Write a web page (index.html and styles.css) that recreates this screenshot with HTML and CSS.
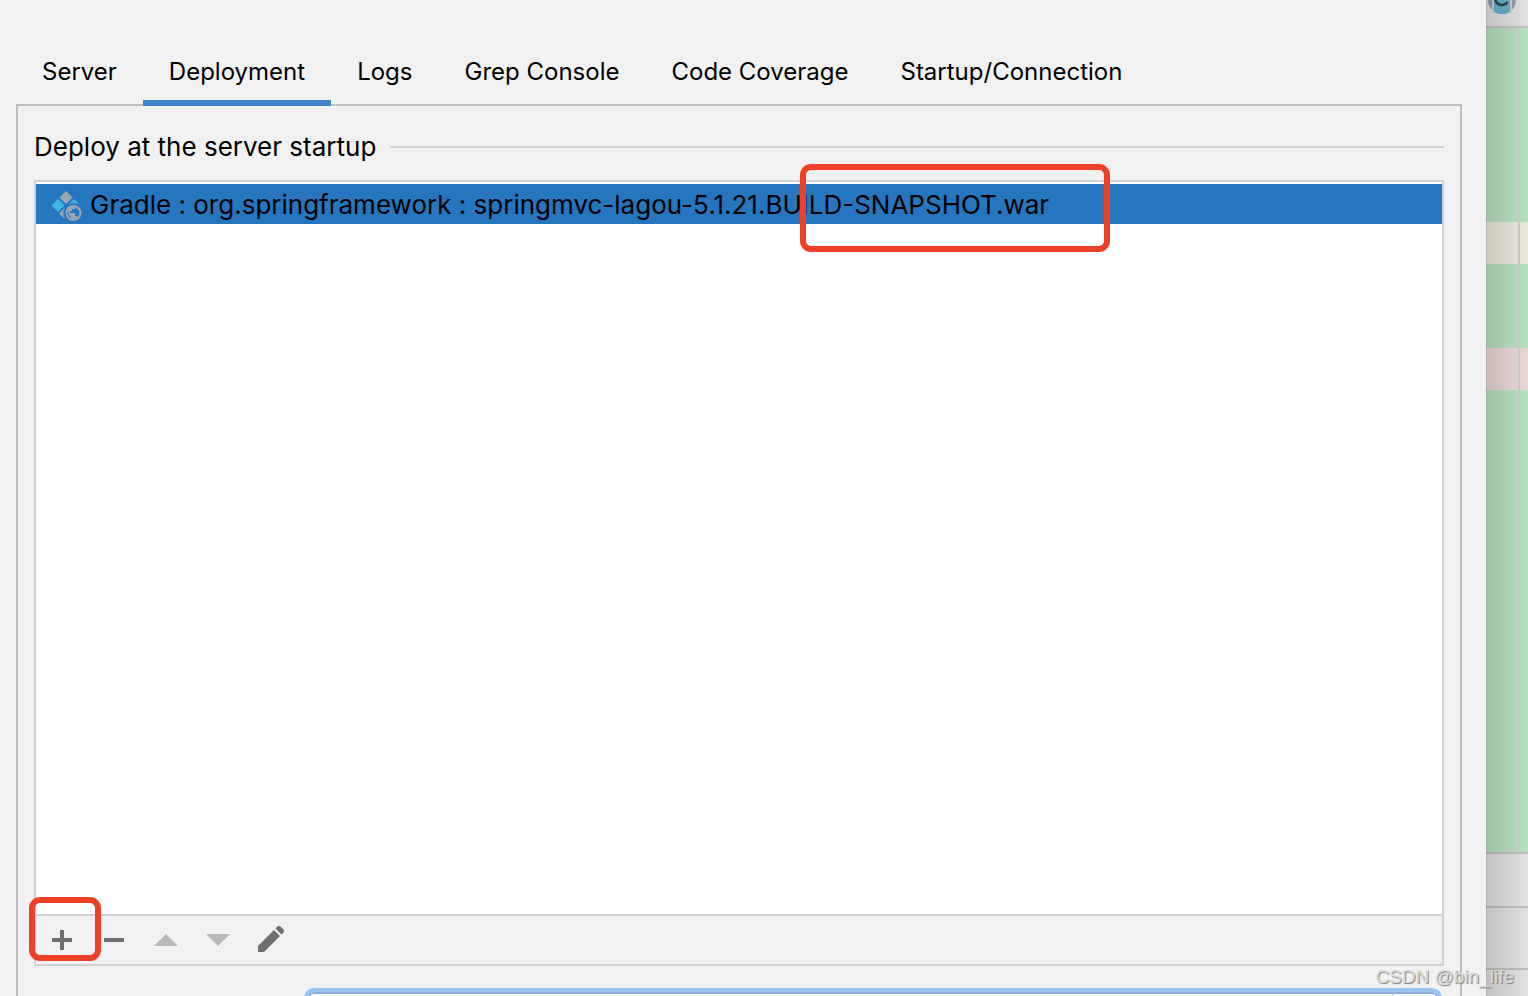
FILE: index.html
```html
<!DOCTYPE html>
<html lang="en">
<head>
<meta charset="utf-8">
<meta name="viewport" content="width=device-width, initial-scale=1">
<title>Deployment</title>
<link rel="stylesheet" href="styles.css">
</head>
<body>
<div class="screen">
  <main class="dialog">
    <nav class="tabs" role="tablist">
      <button class="tab" role="tab">Server</button>
      <button class="tab tab-active" role="tab" aria-selected="true">Deployment</button>
      <button class="tab" role="tab">Logs</button>
      <button class="tab" role="tab">Grep Console</button>
      <button class="tab" role="tab">Code Coverage</button>
      <button class="tab" role="tab">Startup/Connection</button>
    </nav>
    <section class="panel">
      <h2 class="heading">Deploy at the server startup</h2>
      <div class="deploy">
        <ul class="list">
          <li class="item">
            <svg class="item-icon" viewBox="0 0 32 32" aria-hidden="true">
              <path fill="#9aa7b0" d="M16 0l6.500 6.500L16 13 9.500 6.500z"/>
              <path fill="#40b6e0" d="M8 8l6.500 6.500L8 21 1.500 14.500z"/>
              <path fill="#40b6e0" d="M24 8l5.500 5.500q-6-2.500-11 0z"/>
              <path fill="#9aa7b0" d="M15 16.500q-3.500 5 0 11.500l-6-5.500z"/>
              <circle cx="23.500" cy="22" r="7" fill="none" stroke="#9aa7b0" stroke-width="2"/>
              <path fill="#9aa7b0" d="M17 19q2-4 6-4l2 1v2h-3v2h-2v2h5v3h2l1 2q-4 3-7 2v-3l-2-2v-2z"/>
            </svg>
            <span>Gradle : org.springframework : springmvc-lagou-5.1.21.BUILD-SNAPSHOT.war</span>
            <div class="mark mark-file"></div>
          </li>
        </ul>
        <div class="toolbar">
          <button class="tool" aria-label="Add"><svg viewBox="0 0 32 32"><path fill="#6e6e6e" d="M14 6h4v8h8v4h-8v8h-4v-8H6v-4h8z"/></svg></button>
          <button class="tool" aria-label="Remove"><svg viewBox="0 0 32 32"><path fill="#6e6e6e" d="M6 14h20v4H6z"/></svg></button>
          <button class="tool" aria-label="Move up" disabled><svg viewBox="0 0 32 32"><path fill="#bababa" d="M4 22L16 10l12 12z"/></svg></button>
          <button class="tool" aria-label="Move down" disabled><svg viewBox="0 0 32 32"><path fill="#bababa" d="M4 10h24L16 22z"/></svg></button>
          <button class="tool" aria-label="Edit"><svg viewBox="0 0 32 32"><path fill="#6e6e6e" d="M4 22L20 6l6 6L10 28H4zM21.500 4.500l2-2q1.500-1 3 0l3 3q1 1.500 0 3l-2 2z"/></svg></button>
          <div class="mark mark-add"></div>
        </div>
      </div>
      <div class="context">
        <select class="context-select" aria-label="Application context"><option></option></select>
      </div>
    </section>
  </main>
  <aside class="editor">
    <div class="editor-tab">
      <svg class="class-icon" viewBox="0 0 30 30" aria-hidden="true">
        <circle cx="15" cy="15" r="14" fill="#98a3ad"/>
        <path fill="#69b5d0" d="M7 0h16v27q-8 4-16 0z"/>
        <path fill="none" stroke="#d4d8da" stroke-width="2" d="M6 0v28M24 0v28"/>
        <path fill="none" stroke="#2d4651" stroke-width="2.500" d="M20.500 17A6.500 6 0 1 1 20.500 11"/>
      </svg>
    </div>
    <div class="code">
      <div class="code-warn"></div>
      <div class="code-error"></div>
    </div>
    <div class="pane pane-tabs"></div>
    <div class="pane pane-body"></div>
    <div class="pane-status"></div>
  </aside>
  <div class="watermark">CSDN @bin_life</div>
</div>
</body>
</html>
```
FILE: styles.css
```css
* { box-sizing: border-box; }

body {
  margin: 0;
  font-family: Inter, "Liberation Sans", sans-serif;
  color: #000;
}

.screen {
  position: relative;
  display: flex;
  height: 100vh;
  overflow: hidden;
  background: #f1f1f1;
}

.dialog {
  flex: 1;
  min-width: 0;
  display: flex;
  flex-direction: column;
  padding: 38px 24px 0 16px;
}

.tabs { display: flex; }

.tab {
  height: 68px;
  margin-bottom: -2px;
  padding: 6px 26px 0;
  border: 0;
  border-bottom: 6px solid transparent;
  background: none;
  font: 24px/28px Inter, sans-serif;
  color: inherit;
  white-space: nowrap;
}

.tab-active {
  position: relative;
  border-bottom-color: #4083c9;
}

.panel {
  flex: 1;
  min-height: 0;
  display: flex;
  flex-direction: column;
  padding: 24px 16px 0;
  border: 2px solid #bfbfbf;
  border-bottom: 0;
}

.heading {
  display: flex;
  align-items: center;
  gap: 14px;
  margin: 0 0 16px;
  font-size: 26px;
  font-weight: 400;
  line-height: 34px;
}

.heading::after {
  content: "";
  flex: 1;
  height: 2px;
  background: #d1d1d1;
}

.deploy {
  flex: 1;
  min-height: 0;
  display: flex;
  flex-direction: column;
  border: 2px solid #d1d1d1;
}

.list {
  flex: 1;
  margin: 0;
  padding: 2px 0 0;
  list-style: none;
  background: #fff;
}

.item {
  position: relative;
  display: flex;
  align-items: center;
  gap: 8px;
  height: 40px;
  padding: 2px 14px 0;
  background: #2675bf;
  font-size: 26px;
  line-height: 38px;
  white-space: nowrap;
}

.item-icon {
  width: 32px;
  height: 32px;
  margin-top: 4px;
}

.mark {
  position: absolute;
  border: 6px solid #ee4026;
  border-radius: 11px;
  pointer-events: none;
}

.mark-file {
  left: 764px;
  top: -20px;
  width: 310px;
  height: 88px;
}

.mark-add {
  left: -7px;
  top: -19px;
  width: 72px;
  height: 64px;
}

.toolbar {
  position: relative;
  display: flex;
  gap: 20px;
  height: 50px;
  padding: 8px 10px;
  border-top: 2px solid #d1d1d1;
}

.tool {
  width: 32px;
  height: 32px;
  padding: 0;
  border: 0;
  background: none;
}

.tool svg { display: block; }

.context {
  height: 30px;
  padding: 22px 2px 0 270px;
  overflow: hidden;
}

.context-select {
  display: block;
  width: 100%;
  height: 56px;
  appearance: none;
  border: 4px solid #97c3f3;
  border-radius: 10px;
  background: linear-gradient(#cfcfcf, #cfcfcf) right 44px top / 2px 100% no-repeat #fff;
  box-shadow: inset 0 0 0 2px #87afda;
}

.editor {
  position: relative;
  width: 42px;
  display: flex;
  flex-direction: column;
  background: #e8e8e8;
}

.editor::after {
  content: "";
  position: absolute;
  inset: 0;
  border-left: 1px solid rgba(0, 0, 0, 0.2);
  background: linear-gradient(to right, rgba(0, 0, 0, 0.16), rgba(0, 0, 0, 0.03));
}

.editor-tab {
  height: 28px;
  border-bottom: 2px solid #c9c9c9;
  overflow: hidden;
}

.class-icon {
  display: block;
  width: 30px;
  height: 30px;
  margin: -15px 0 0 1px;
}

.code {
  position: relative;
  flex: 1;
  padding-top: 194px;
  background: #bee6c4;
}

.code::after {
  content: "";
  position: absolute;
  top: 0;
  bottom: 0;
  right: 8px;
  width: 2px;
  background: #d3d3d3;
}

.code-warn {
  height: 42px;
  margin-bottom: 84px;
  background: #f3f0e2;
}

.code-error {
  height: 42px;
  background: #f2dfdc;
}

.pane { border-top: 2px solid #c6c6c6; }
.pane-tabs { height: 54px; }
.pane-body { height: 62px; }

.pane-status {
  height: 28px;
  border-top: 2px solid #c6c6c6;
}

.watermark {
  position: absolute;
  right: 14px;
  bottom: 6px;
  font: 19px/26px "Liberation Sans", sans-serif;
  color: #dcdcdc;
  text-shadow: 1px 1px 1px #777;
}
```
